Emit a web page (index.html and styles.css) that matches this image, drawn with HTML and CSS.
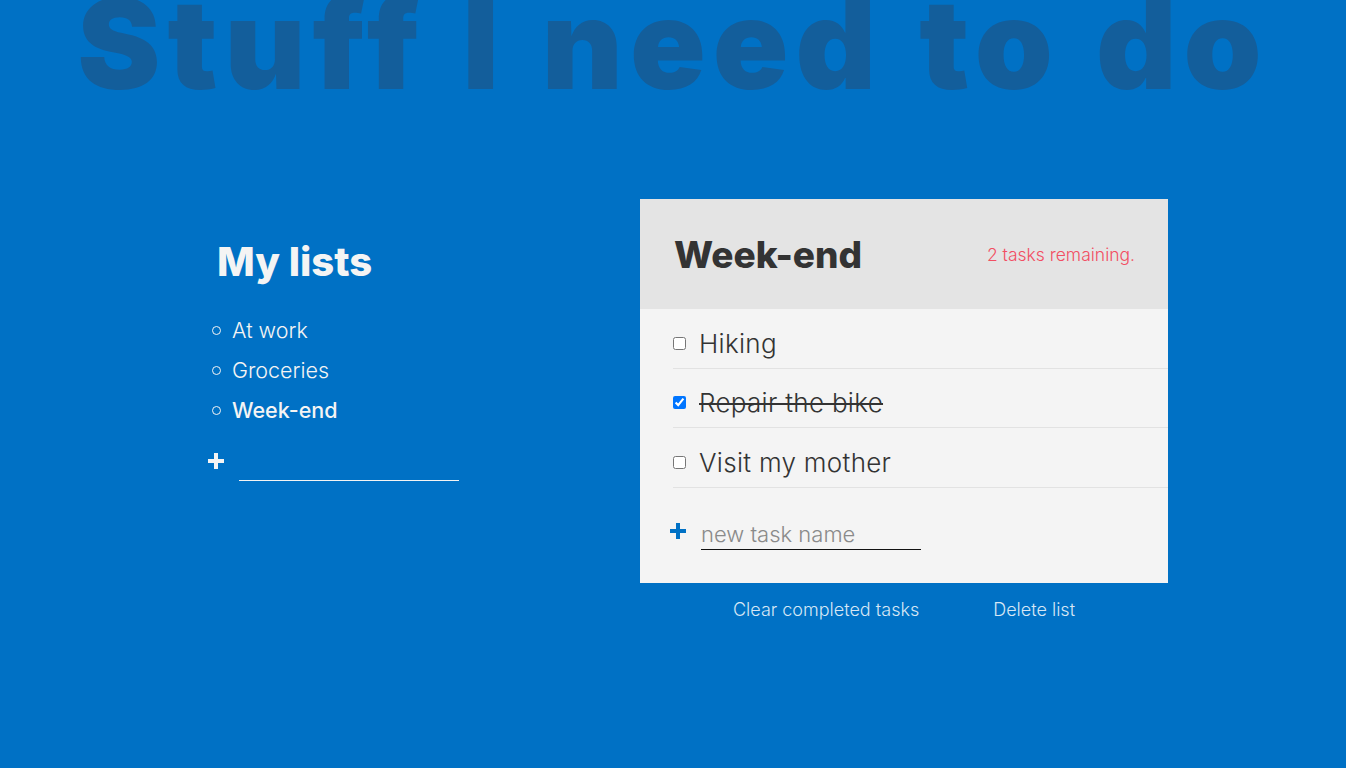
FILE: index.html
```html
<!DOCTYPE html>
<html lang="en">
<head>
<meta charset="utf-8">
<title>Stuff I need to do</title>
<link rel="stylesheet" href="styles.css">
</head>
<body>
  <h1 class="title">Stuff I need to do</h1>
  <main class="layout">
    <section class="lists">
      <h2 class="lists-title">My lists</h2>
      <ul class="lists-items">
        <li class="lists-item">At work</li>
        <li class="lists-item">Groceries</li>
        <li class="lists-item active">Week-end</li>
      </ul>
      <form class="new-list">
        <span class="plus plus-white"><svg width="16" height="16" viewBox="0 0 16 16"><rect x="6" y="0" width="4" height="16"/><rect x="0" y="6" width="16" height="4"/></svg></span>
        <input class="new-list-input" type="text" aria-label="new list name">
      </form>
    </section>
    <section class="todo">
      <div class="card">
        <header class="card-header">
          <h2 class="card-title">Week-end</h2>
          <p class="task-count">2 tasks remaining.</p>
        </header>
        <div class="card-body">
          <div class="tasks">
            <label class="task"><input type="checkbox" class="task-check"><span class="task-name">Hiking</span></label>
            <label class="task"><input type="checkbox" class="task-check" checked><span class="task-name done">Repair the bike</span></label>
            <label class="task"><input type="checkbox" class="task-check"><span class="task-name">Visit my mother</span></label>
          </div>
          <form class="new-task">
            <span class="plus plus-blue"><svg width="16" height="16" viewBox="0 0 16 16"><rect x="6" y="0" width="4" height="16"/><rect x="0" y="6" width="16" height="4"/></svg></span>
            <input class="new-task-input" type="text" placeholder="new task name">
          </form>
        </div>
      </div>
      <div class="actions">
        <button class="action" type="button">Clear completed tasks</button>
        <button class="action" type="button">Delete list</button>
      </div>
    </section>
  </main>
</body>
</html>
```

FILE: styles.css
```css
* { box-sizing: border-box; }

html, body {
  margin: 0;
  padding: 0;
}

body {
  background: #0071c5;
  font-family: Inter, "Open Sans", "Liberation Sans", sans-serif;
  font-weight: 300;
  color: #f4f4f4;
  overflow: hidden;
  height: 768px;
}

.title {
  margin: -19px 0 0;
  font-size: 125px;
  line-height: 1;
  font-weight: 900;
  text-align: center;
  color: #135e9b;
  letter-spacing: 7px;
  word-spacing: 4px;
  white-space: nowrap;
}

.layout {
  display: grid;
  grid-template-columns: 432px 528px;
  padding-left: 208px;
  margin-top: 93px;
}

.lists {
  padding-top: 38px;
}

.lists-title {
  margin: 0 0 24px 9px;
  font-size: 40px;
  line-height: 49px;
  font-weight: 800;
  color: #f4f4f4;
}

.lists-items {
  list-style: none;
  margin: 0;
  padding: 0;
}

.lists-item {
  display: flex;
  align-items: center;
  height: 40px;
  font-size: 21.5px;
  padding-left: 4px;
}

.lists-item::before {
  content: "";
  width: 7px;
  height: 7px;
  border: 1px solid #f4f4f4;
  border-radius: 50%;
  margin-right: 11px;
}

.lists-item.active {
  font-weight: 500;
}

.new-list {
  display: flex;
  align-items: flex-start;
  margin-top: 22px;
}

.plus svg { display: block; }

.plus-white { fill: #f4f4f4; margin-top: 1px; }

.new-list-input {
  margin-left: 15px;
  width: 220px;
  height: 29px;
  background: transparent;
  border: none;
  border-bottom: 1px solid #f4f4f4;
  color: #f4f4f4;
  font: inherit;
  font-size: 20px;
  outline: none;
  padding: 0;
}

.card {
  background: #f4f4f4;
  color: #333;
}

.card-header {
  display: flex;
  align-items: center;
  justify-content: space-between;
  height: 110px;
  padding: 0 33px 0 34px;
  background: #e4e4e4;
}

.card-title {
  margin: 0;
  font-size: 37px;
  font-weight: 800;
  color: #333;
}

.task-count {
  margin: 0;
  font-size: 17.5px;
  font-weight: 300;
  color: #f24e62;
}

.tasks {
  padding-left: 33px;
}

.task {
  display: flex;
  align-items: center;
  height: 60px;
  padding-top: 9px;
  border-bottom: 1px solid #e2e2e2;
  cursor: pointer;
}

.task:nth-child(2) { height: 59px; }

.task-check {
  width: 13px;
  height: 13px;
  margin: 0 13px 0 0;
}

.task-name {
  font-size: 26px;
  font-weight: 300;
  letter-spacing: 0.3px;
  color: #333;
}

.task-name.done {
  text-decoration: line-through;
  text-decoration-color: #333;
  text-decoration-thickness: 2px;
}

.new-task {
  display: flex;
  align-items: center;
  padding: 31px 33px 33px 30px;
}

.plus-blue { fill: #0071c5; margin-top: -8px; }

.new-task-input {
  margin-left: 15px;
  width: 220px;
  height: 31px;
  background: transparent;
  border: none;
  border-bottom: 1px solid #111;
  color: #333;
  font: inherit;
  font-size: 22px;
  padding: 0;
  outline: none;
}

.new-task-input::placeholder {
  color: #8a8a8a;
}

.actions {
  display: flex;
  justify-content: center;
  gap: 74px;
  margin-top: 17px;
}

.action {
  background: none;
  border: none;
  padding: 0;
  font: inherit;
  font-size: 18px;
  line-height: 20px;
  color: #d7e7f5;
  cursor: pointer;
}
```
